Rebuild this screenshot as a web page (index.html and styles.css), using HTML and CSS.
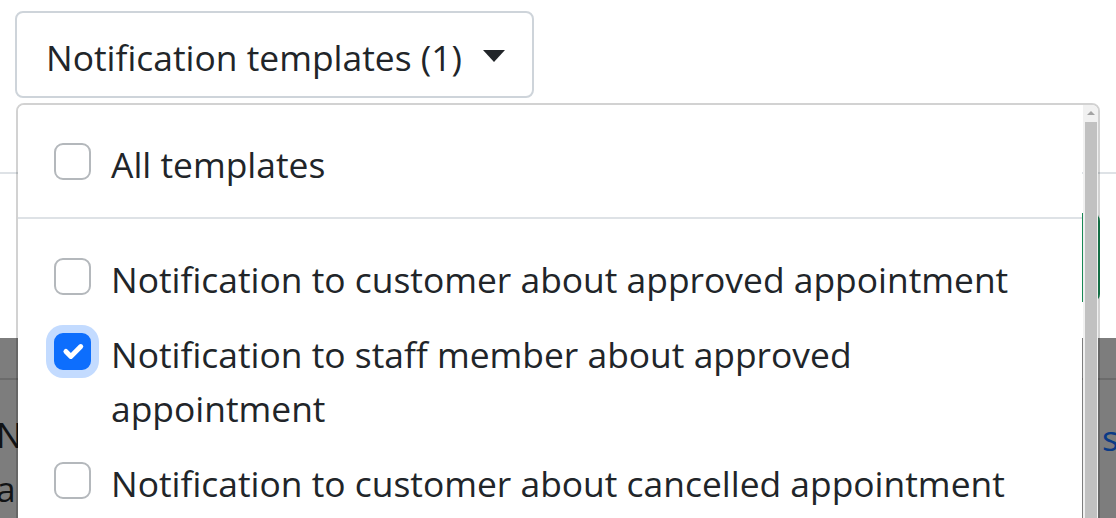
FILE: index.html
```html
<!DOCTYPE html>
<html lang="en">
<head>
<meta charset="utf-8">
<title>Notification templates</title>
<link rel="stylesheet" href="styles.css">
</head>
<body>
<div class="page">
  <header class="page-head">
    <div class="dropdown">
      <button class="dd-toggle" type="button">Notification templates (1)<span class="caret"></span></button>
      <div class="dd-menu">
        <div class="dd-body">
          <div class="dd-head">
            <label class="check"><span class="box"></span><span class="check-text">All templates</span></label>
          </div>
          <ul class="dd-list">
            <li class="dd-item"><label class="check"><span class="box"></span><span class="check-text">Notification to customer about approved appointment</span></label></li>
            <li class="dd-item"><label class="check"><span class="box box-checked"><svg viewBox="0 0 20 20" class="tick"><path d="m6 10 3 3 6-6" fill="none" stroke="#fff" stroke-width="3" stroke-linecap="round" stroke-linejoin="round"/></svg></span><span class="check-text">Notification to staff member about approved appointment</span></label></li>
            <li class="dd-item"><label class="check"><span class="box"></span><span class="check-text">Notification to customer about cancelled appointment</span></label></li>
            <li class="dd-item"><label class="check"><span class="box"></span><span class="check-text">Notification to staff member about cancelled appointment</span></label></li>
          </ul>
        </div>
        <div class="dd-gap"></div>
        <div class="scrollbar"><span class="sb-arrow"></span><span class="sb-thumb"></span></div>
      </div>
    </div>
  </header>
  <section class="page-actions"><span class="btn-success"></span></section>
  <section class="table">
    <div class="thead"></div>
    <div class="trow">
      <div class="cell-name"><span class="name-text">Notification to customer about approved appointment</span></div>
      <a class="cell-link">settings</a>
    </div>
  </section>
</div>
</body>
</html>
```
FILE: styles.css
```css
* { box-sizing: border-box; }
html, body { margin: 0; height: 100%; overflow: hidden; }
body {
  font-family: "Open Sans", "Noto Sans", sans-serif;
  font-size: 35.4px;
  line-height: 54px;
  color: #212529;
  background: #fff;
}
.page { width: 1116px; }

.page-head {
  height: 174px;
  padding: 11px 0 0 15px;
  border-bottom: 2px solid #dee2e6;
  position: relative;
  z-index: 5;
}
.dropdown { position: relative; display: inline-block; }
.dd-toggle {
  font: inherit;
  color: inherit;
  background: #fff;
  border: 2px solid #ced4da;
  border-radius: 8px;
  height: 87px;
  padding: 4px 27px 0 29px;
  display: flex;
  align-items: center;
}
.caret {
  width: 0; height: 0;
  border-top: 12px solid #212529;
  border-left: 11px solid transparent;
  border-right: 11px solid transparent;
  margin-left: 21px;
  margin-bottom: 2px;
}

.dd-menu {
  position: absolute;
  top: 92px;
  left: 1px;
  width: 1084px;
  height: 470px;
  border: 2px solid rgba(0, 0, 0, .175);
  border-radius: 8px;
  display: flex;
  overflow: hidden;
}
.dd-body { width: 1064px; background: #fff; }
.dd-gap { width: 1px; }
.scrollbar {
  width: 15px;
  background: #f1f1f1;
  display: flex;
  flex-direction: column;
  align-items: center;
}
.sb-arrow {
  margin-top: 6px;
  width: 0; height: 0;
  border-bottom: 4px solid #a3a3a3;
  border-left: 4px solid transparent;
  border-right: 4px solid transparent;
}
.sb-thumb {
  margin-top: 7px;
  width: 12px;
  flex: 1;
  background: #c1c1c1;
}

.dd-head {
  padding: 29px 36px;
  border-bottom: 2px solid #dee2e6;
}
.dd-list { list-style: none; margin: 0; padding: 19.5px 0 0; }
.dd-item { padding: 10.5px 36px; }

.check { display: flex; align-items: flex-start; }
.check-text { margin-top: 3px; margin-bottom: -3px; }
.box {
  flex: none;
  width: 37px; height: 37px;
  margin-top: 9px;
  margin-right: 20px;
  border: 2px solid #b4b8bc;
  border-radius: 9px;
  background: #fff;
  display: flex;
  align-items: center;
  justify-content: center;
}
.box-checked {
  background: #0d6efd;
  border-color: #0d6efd;
  box-shadow: 0 0 0 8px #c3dbff;
}
.tick { width: 37px; height: 37px; }

.page-actions {
  height: 164px;
  padding: 39px 16px 0 0;
  display: flex;
  justify-content: flex-end;
  align-items: flex-start;
}
.btn-success {
  display: block;
  width: 200px;
  height: 89px;
  background: #198754;
  border-radius: 8px;
}

.table { background: #7d7d7d; height: 200px; }
.thead { height: 42px; border-bottom: 2px solid #6b6b6b; }
.trow { display: flex; padding-top: 27px; }
.cell-name { width: 1106px; margin-left: -4px; flex: none; }
.name-text { display: block; width: 470px; color: #111315; }
.cell-link { color: #0a3a86; padding-top: 3px; }
```
